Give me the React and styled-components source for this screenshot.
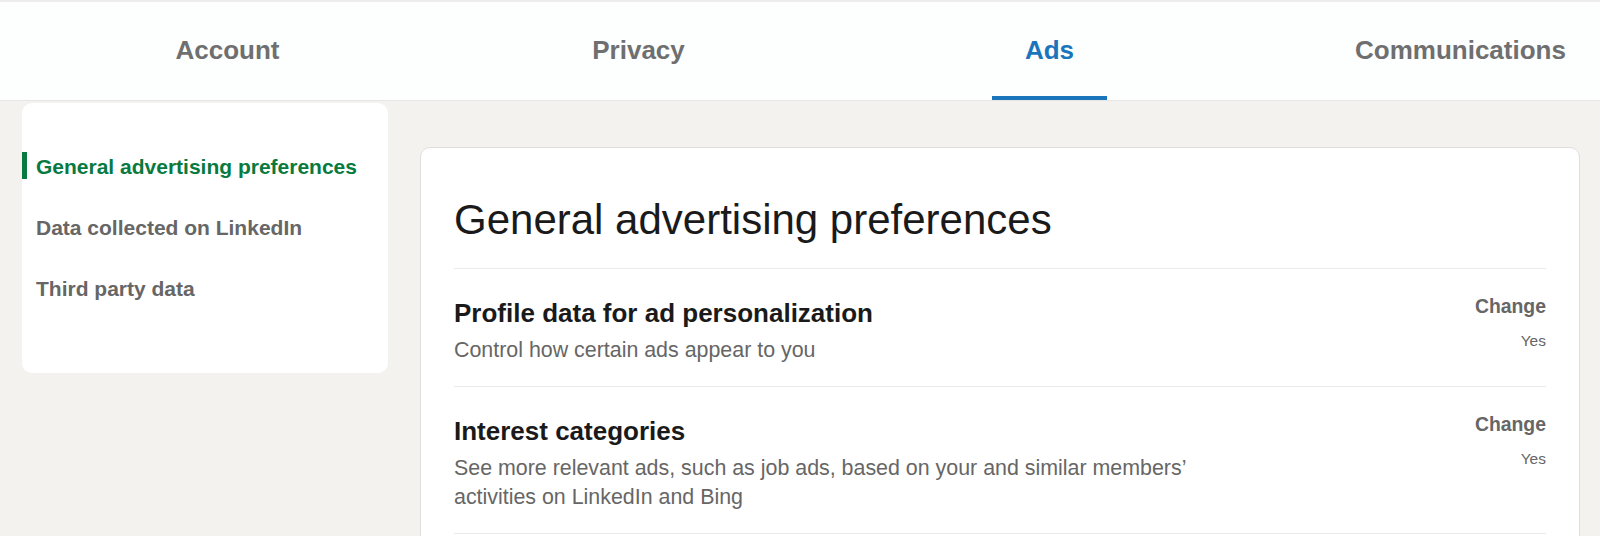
import React from 'react';
import styled, { createGlobalStyle } from 'styled-components';

const GlobalStyle = createGlobalStyle`
  html, body {
    margin: 0;
    padding: 0;
    background: #f3f2ef;
    font-family: "Liberation Sans", Arial, sans-serif;
    -webkit-font-smoothing: antialiased;
  }
  * {
    box-sizing: border-box;
  }
`;

const tabs = ['Account', 'Privacy', 'Ads', 'Communications'];

const sideLinks = [
  'General advertising preferences',
  'Data collected on LinkedIn',
  'Third party data',
];

const settings = [
  {
    title: 'Profile data for ad personalization',
    text: 'Control how certain ads appear to you',
    value: 'Yes',
  },
  {
    title: 'Interest categories',
    text: 'See more relevant ads, such as job ads, based on your and similar members’ activities on LinkedIn and Bing',
    value: 'Yes',
  },
];

export default function App() {
  return (
    <Page>
      <GlobalStyle />
      <Header>
        <TabRow>
          {tabs.map((tab) => (
            <Tab key={tab}>
              <TabLabel active={tab === 'Ads'}>{tab}</TabLabel>
            </Tab>
          ))}
        </TabRow>
      </Header>
      <Body>
        <Sidebar>
          {sideLinks.map((link, i) => (
            <SideLink key={link} active={i === 0}>
              {link}
            </SideLink>
          ))}
        </Sidebar>
        <Card>
          <Title>General advertising preferences</Title>
          {settings.map((s) => (
            <SettingRow key={s.title}>
              <SettingInfo>
                <SettingTitle>{s.title}</SettingTitle>
                <SettingText>{s.text}</SettingText>
              </SettingInfo>
              <SettingAction>
                <ChangeButton type="button">Change</ChangeButton>
                <Value>{s.value}</Value>
              </SettingAction>
            </SettingRow>
          ))}
        </Card>
      </Body>
    </Page>
  );
}

const Page = styled.div`
  width: 1600px;
  height: 536px;
  overflow: hidden;
  background: #f3f2ef;
`;

const Header = styled.header`
  height: 101px;
  background: #fdfefe;
  border-top: 2px solid #ededed;
  border-bottom: 1px solid #e6e6e6;
  overflow: hidden;
`;

const TabRow = styled.nav`
  display: flex;
  height: 100%;
  padding-left: 22px;
`;

const Tab = styled.div`
  flex: 0 0 411px;
  display: flex;
  justify-content: center;
  align-items: stretch;
`;

const TabLabel = styled.span`
  position: relative;
  display: flex;
  align-items: center;
  padding: 0 33px 2px;
  font-size: 26px;
  font-weight: 700;
  color: ${(p) => (p.active ? '#1b75bb' : '#6f6f6f')};

  &::after {
    content: '';
    display: ${(p) => (p.active ? 'block' : 'none')};
    position: absolute;
    left: 0;
    right: 0;
    bottom: -1px;
    height: 5px;
    background: #1b75bb;
  }
`;

const Body = styled.main`
  display: flex;
  align-items: flex-start;
  gap: 32px;
  padding: 0 20px 0 22px;
`;

const Sidebar = styled.aside`
  flex: 0 0 366px;
  margin-top: 2px;
  padding: 33px 0 54px;
  background: #fff;
  border-radius: 10px;
`;

const SideLink = styled.div`
  position: relative;
  padding: 17px 14px;
  line-height: 27px;
  font-size: 21px;
  font-weight: 700;
  color: ${(p) => (p.active ? '#087a3f' : '#666666')};

  &::before {
    content: '';
    display: ${(p) => (p.active ? 'block' : 'none')};
    position: absolute;
    left: 0;
    top: 16px;
    width: 5px;
    height: 27px;
    background: #087a3f;
  }
`;

const Card = styled.section`
  flex: 0 0 1160px;
  margin-top: 46px;
  padding: 46px 33px 0;
  background: #fff;
  border: 1px solid #dfdedb;
  border-radius: 10px;
  min-height: 420px;
`;

const Title = styled.h1`
  margin: 0;
  padding-bottom: 22px;
  border-bottom: 1px solid #ebebeb;
  font-size: 42px;
  line-height: 52px;
  font-weight: 400;
  color: #1a1a1a;
`;

const SettingRow = styled.div`
  display: flex;
  justify-content: space-between;
  align-items: flex-start;
  padding: 25px 0 21px;
  border-bottom: 1px solid #ebebeb;
`;

const SettingInfo = styled.div`
  display: flex;
  flex-direction: column;
  gap: 7px;
  padding-top: 3px;
  max-width: 760px;
`;

const SettingTitle = styled.h2`
  margin: 0;
  font-size: 26px;
  line-height: 32px;
  font-weight: 700;
  color: #1a1a1a;
`;

const SettingText = styled.p`
  margin: 0;
  font-size: 21.4px;
  line-height: 29px;
  color: #666666;
`;

const SettingAction = styled.div`
  display: flex;
  flex-direction: column;
  align-items: flex-end;
  gap: 13px;
`;

const ChangeButton = styled.button`
  padding: 0;
  border: none;
  background: none;
  font-family: inherit;
  font-size: 19.4px;
  line-height: 24px;
  font-weight: 700;
  color: #666666;
  cursor: pointer;
`;

const Value = styled.span`
  font-size: 15.5px;
  line-height: 20px;
  color: #666666;
`;
